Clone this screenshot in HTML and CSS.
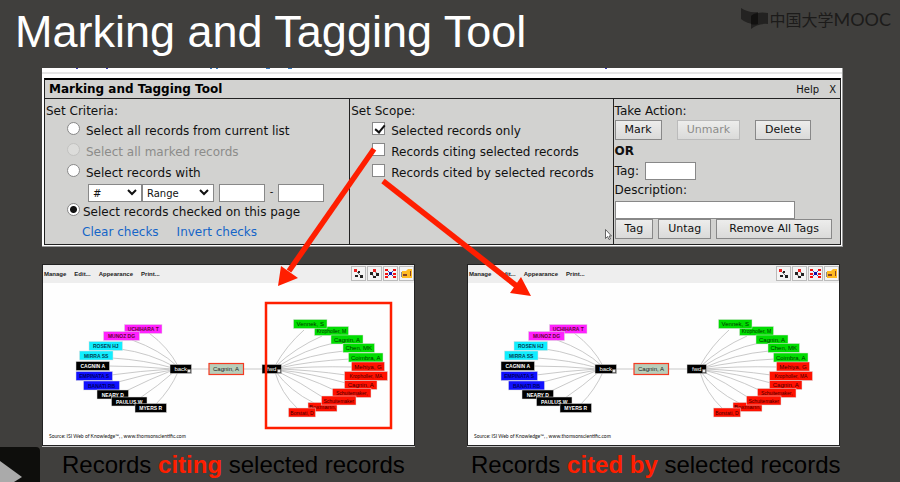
FILE: index.html
```html
<!DOCTYPE html>
<html lang="en">
<head>
<meta charset="utf-8">
<meta name="viewport" content="width=device-width, initial-scale=1">
<title>Marking and Tagging Tool</title>
<link rel="stylesheet" href="styles.css">
</head>
<body>
<main class="slide">
  <header class="slide-head">
    <h1>Marking and Tagging Tool</h1>
    <div class="brand">
      <svg class="brand-mark" viewBox="0 0 27 22" aria-hidden="true">
        <path d="M0 0Q7 5 17 4V16Q7 17 0 11Z" fill="#242322"/>
        <path d="M10 8Q17 3 27 5V16Q17 15 10 21Z" fill="#1c1b1a" opacity=".8"/>
        <path d="M10 8Q13 5 17 5V16Q13 17 10 16Z" fill="#121110"/>
      </svg>
      <span class="brand-cn">中国大学</span><span class="brand-en">MOOC</span>
    </div>
  </header>

  <section class="sheet">
    <svg class="sheet-strip" viewBox="0 0 800 6" preserveAspectRatio="none" aria-hidden="true">
      <path d="M34 0h2v1h-2zM64 0h2v1h-2zM563 0h2v1h-2z" fill="#3b3bb0"/>
      <path d="M168 0h2v1h-2zM174 0h2v1h-2zM224 0h4v1h-4zM246 0h4v1h-4z" fill="#3a7cc4"/>
      <path d="M0 5h800" stroke="#ccc"/>
    </svg>
    <form class="tool">
      <div class="tool-head">
        <h2>Marking and Tagging Tool</h2>
        <a href="#">Help</a>
        <a href="#">X</a>
      </div>
      <div class="tool-body">
        <div class="col">
          <p class="legend">Set Criteria:</p>
          <label class="option"><input type="radio" name="criteria"><span>Select all records from current list</span></label>
          <label class="option off"><input type="radio" name="criteria" disabled><span>Select all marked records</span></label>
          <label class="option"><input type="radio" name="criteria"><span>Select records with</span></label>
          <div class="range">
            <span class="pick pick-small">
              <select aria-label="Field"><option>#</option></select>
              <svg viewBox="0 0 10 7" aria-hidden="true"><path d="M1 1l4 4 4-4"/></svg>
            </span>
            <span class="pick">
              <select aria-label="Comparison"><option>Range</option></select>
              <svg viewBox="0 0 10 7" aria-hidden="true"><path d="M1 1l4 4 4-4"/></svg>
            </span>
            <input class="field bound first" type="text" aria-label="From">
            <span class="dash">-</span>
            <input class="field bound" type="text" aria-label="To">
          </div>
          <label class="option near"><input type="radio" name="criteria" checked><span>Select records checked on this page</span></label>
          <div class="links"><a href="#">Clear checks</a><a href="#">Invert checks</a></div>
        </div>
        <div class="col">
          <p class="legend">Set Scope:</p>
          <label class="option"><input type="checkbox" checked><span>Selected records only</span></label>
          <label class="option"><input type="checkbox"><span>Records citing selected records</span></label>
          <label class="option"><input type="checkbox"><span>Records cited by selected records</span></label>
        </div>
        <div class="col">
          <p class="legend">Take Action:</p>
          <div class="actions wide">
            <button type="button">Mark</button>
            <button type="button" disabled>Unmark</button>
            <button type="button">Delete</button>
          </div>
          <p class="or">OR</p>
          <div class="tag-row"><label for="tag">Tag:</label><input class="field" id="tag" type="text"></div>
          <label class="desc-label" for="desc">Description:</label>
          <input class="field desc" id="desc" type="text">
          <div class="actions">
            <button type="button">Tag</button>
            <button type="button">Untag</button>
            <button class="roomy" type="button">Remove All Tags</button>
          </div>
        </div>
      </div>
    </form>
  </section>

  <div class="maps">
    <figure>
      <div class="map">
        <div class="map-bar">
          <button type="button">Manage</button><button type="button">Edit...</button><button type="button">Appearance</button><button type="button">Print...</button>
          <div class="map-tools"></div>
        </div>
        <svg class="graph" viewBox="43 283 371 162" data-framed="yes" role="img" aria-label="Citation map, citing records"></svg>
      </div>
      <figcaption>Records <strong>citing</strong> selected records</figcaption>
    </figure>
    <figure>
      <div class="map">
        <div class="map-bar">
          <button type="button">Manage</button><button type="button">Edit...</button><button type="button">Appearance</button><button type="button">Print...</button>
          <div class="map-tools"></div>
        </div>
        <svg class="graph" viewBox="43 283 371 162" role="img" aria-label="Citation map, cited records"></svg>
      </div>
      <figcaption class="wide-caption">Records <strong>cited by</strong> selected records</figcaption>
    </figure>
  </div>

  <svg class="overlay" viewBox="0 0 900 482" preserveAspectRatio="xMinYMin meet" aria-hidden="true">
    <g stroke="#ff1e00" stroke-width="5.5">
      <path d="M374 149L289 271"/>
      <path d="M383 181L518 287"/>
    </g>
    <path d="M278 286L281 266L298 278ZM531 296L521 277L510 293Z" fill="#ff1e00"/>
    <path d="M605.5 229.5v9l2-2 1.5 3 1.5-.7-1.5-2.8h2.5z" fill="#fff" stroke="#444" stroke-width=".8"/>
  </svg>
  <button class="play" type="button" aria-label="Play">
    <svg viewBox="0 0 40 35" aria-hidden="true"><path d="M0 14L22 30L14 35H0Z" fill="#aaa"/></svg>
  </button>
</main>
<script src="graph.js"></script>
</body>
</html>
```
FILE: styles.css
```css
* { box-sizing: border-box; }

body {
  margin: 0;
  background: #403f3d;
  color: #111;
  font-family: "DejaVu Sans", sans-serif;
  font-size: 12px;
}

h1, h2, p, figure { margin: 0; }
button, input, select { font: inherit; color: inherit; margin: 0; }

.slide {
  position: relative;
  min-height: 100vh;
  overflow: hidden;
}

.slide-head {
  display: flex;
  justify-content: space-between;
  align-items: flex-start;
  height: 68px;
  padding: 4px 9px 0 15px;
}

h1 {
  color: #fff;
  font: 45px/56px "Liberation Sans", sans-serif;
}

.brand {
  display: flex;
  align-items: center;
  height: 30px;
  color: #1c1b1a;
}
.brand-mark { width: 27px; height: 22px; margin-right: 1px; }
.brand-cn { font: 400 16px/24px "Noto Sans CJK SC", sans-serif; }
.brand-en { font: 400 18px/24px Lato, sans-serif; }

.sheet {
  margin: 0 57px 0 42px;
  padding-bottom: 1px;
  background: #fff;
  border: 1px solid #999;
  border-width: 0 1px 1px 0;
}
.sheet-strip { display: block; width: 100%; height: 6px; }

.tool {
  margin: 4px 1px 0 2px;
  background: #d2d2d0;
  border: 1px solid #222;
  border-top: 2px solid #000;
}
.tool-head {
  display: flex;
  align-items: center;
  gap: 10px;
  height: 19px;
  padding: 0 4px;
  border-bottom: 1px solid #222;
}
.tool-head h2 { flex: 1; font-size: 12px; color: #000; }
.tool-head a { color: #111; text-decoration: none; font-size: 10px; }

.tool-body {
  display: grid;
  grid-template-columns: 305fr 264fr 228fr;
}
.col { padding: 3px 1px 2px; }
.col + .col { border-left: 1px solid #222; }
.legend { height: 18px; line-height: 18px; }

.option {
  display: flex;
  gap: 6px;
  height: 21px;
  padding-left: 21px;
  line-height: 21px;
}
.legend + .option { margin-top: 1px; }
.option.near { gap: 3px; }
.off { color: #8c8c8a; }

input[type="radio"], input[type="checkbox"] {
  flex: none;
  appearance: none;
  width: 13px;
  height: 13px;
  margin-top: 1px;
  background: #fff;
  border: 1px solid #888;
}
input[type="radio"] { border-radius: 50%; }
input[type="radio"]:disabled { background: #dcdcda; border-color: #c2c2c0; }
input[type="radio"]:checked {
  background: radial-gradient(circle, #111 3px, #fff 4px);
}
input[type="checkbox"]:checked::after {
  content: "";
  display: block;
  width: 4px;
  height: 8px;
  margin: 0 0 0 4px;
  border: solid #111;
  border-width: 0 2px 2px 0;
  transform: rotate(40deg);
}

.range { display: flex; height: 18px; margin-left: 42px; font-size: 10px; }
.pick { position: relative; width: 72px; height: 18px; }
.pick-small { width: 54px; }
.pick select {
  appearance: none;
  display: block;
  width: 100%;
  height: 18px;
  padding: 0 4px;
  background: #fff;
  border: 1px solid #888;
  border-radius: 0;
}
.pick svg { position: absolute; right: 5px; top: 5px; width: 10px; height: 7px; pointer-events: none; }
.pick path { fill: none; stroke: #111; stroke-width: 2; }

.field {
  height: 18px;
  padding: 0 3px;
  background: #fff;
  border: 1px solid #888;
  border-radius: 0;
}
.bound { width: 46px; }
.first { margin-left: 5px; }
.dash { width: 13px; text-align: center; line-height: 16px; }

.links { display: flex; gap: 18px; padding-left: 36px; line-height: 19px; }
.links a { color: #1565c8; text-decoration: none; }

.actions { display: flex; gap: 5px; }
.actions.wide { gap: 15px; }
.actions button {
  height: 20px;
  padding: 0 9px;
  font-size: 11px;
  line-height: 16px;
  background: linear-gradient(#ededec, #dadad9);
  border: 1px solid #888;
  border-radius: 0;
}
.actions button:disabled { color: #8c8c8a; border-color: #bbb; }
.actions .roomy { padding: 0 12px; }
.or { font-weight: bold; line-height: 22px; }
.tag-row { display: flex; gap: 6px; line-height: 18px; }
.tag-row .field { width: 51px; }
.desc-label { display: block; line-height: 21px; }
.desc { display: block; width: 180px; }

.maps {
  display: grid;
  grid-template-columns: repeat(2, minmax(0, 1fr));
  gap: 52px;
  margin: 17px 60px 0 42px;
}
.map {
  background: #fefefe;
  border: 1px solid #222;
  box-shadow: 0 1px #bbb;
}
.map-bar {
  display: flex;
  height: 18px;
  background: #eee;
}
.map-bar button {
  padding: 0 4px 0 1px;
  margin-right: 3px;
  background: none;
  border: 0;
  color: #222;
  font: bold 6px/16px "Liberation Sans", sans-serif;
}
.map-tools { display: flex; gap: 1px; margin-left: auto; }
.map-tools svg { width: 15px; height: 15px; margin-top: 1px; }
.graph { display: block; width: 100%; }
.graph text { font-family: "Liberation Sans", sans-serif; font-size: 6px; text-anchor: middle; }
.graph .caps { font-size: 5px; font-weight: bold; }
.graph .long { font-size: 5px; }
.graph .source { font-family: Lato, sans-serif; font-size: 5px; text-anchor: start; fill: #111; }
.graph .edge { fill: none; stroke: #bbb; stroke-width: 0.8; }
.graph .frame { fill: none; stroke: #ff1e00; stroke-width: 2.5; }

figcaption {
  padding: 5px 0 0 20px;
  color: #000;
  font: 24px/28px "Liberation Sans", sans-serif;
  white-space: nowrap;
}
figcaption strong { color: #ff1e00; }
.wide-caption { padding-left: 4px; }

.overlay {
  position: absolute;
  left: 0;
  top: 0;
  width: 100%;
  pointer-events: none;
}
.play {
  position: absolute;
  left: 0;
  bottom: 0;
  width: 40px;
  height: 35px;
  padding: 0;
  background: #0e0e0c;
  border: 0;
  border-radius: 0 4px 0 0;
}
.play svg { display: block; }
```
FILE: graph.js
```js
const NS = "http://www.w3.org/2000/svg";

// x, y, width, fill, text colour, label
const nodes = [
  [124.5, 324.5, 37.5, "#f2f", "#603", "UCHIHARA T"],
  [103.5, 331.5, 36, "#f2f", "#603", "MUNOZ DG"],
  [89, 341.5, 33.5, "#1ef", "#045", "ROSEN HJ"],
  [79.5, 351, 33.5, "#1ef", "#045", "MIRRA SS"],
  [76, 361.5, 33.5, "#000", "#fff", "CAGNIN A"],
  [76, 371.5, 36.5, "#11f", "#006", "EMPINATA S"],
  [83.5, 381, 36, "#11f", "#006", "BANATI RB"],
  [97, 390, 31.5, "#000", "#fff", "NEARY D"],
  [111.5, 397, 35.5, "#000", "#fff", "PAULUS W"],
  [135, 403.5, 31.5, "#000", "#fff", "MYERS R"],
  [314.5, 326.5, 34, "#0d0", "#030", "Kropholler, M"],
  [293.5, 319.5, 33.5, "#0d0", "#030", "Vennek, S"],
  [331, 335, 32, "#0d0", "#030", "Cagnin, A"],
  [343, 343.5, 31.5, "#0d0", "#030", "Chen, MK"],
  [348.5, 353, 34.5, "#0d0", "#030", "Coimbra, A"],
  [351.5, 362, 33, "#f10", "#400", "Mehiya, G"],
  [344.5, 371.5, 43, "#f10", "#400", "Kropholler, MA"],
  [344.5, 380.5, 32.5, "#f10", "#400", "Cagnin, A"],
  [332.5, 388.5, 38.5, "#f10", "#400", "Schuitemaker,"],
  [308, 402.5, 29, "#f10", "#400", "Boxmann,"],
  [321.5, 396, 34.5, "#f10", "#400", "Schuitemaker"],
  [288.5, 408, 27, "#f10", "#400", "Borstati, D"],
  [170, 364.5, 21.5, "#000", "#fff", "back"],
  [262, 364.5, 19.5, "#000", "#fff", "fwd"]
];

const edges = [
  "M178 366Q168 347 149 333", "M177 366Q160 350 132 340", "M175 367Q150 353 120 349",
  "M173 368Q145 360 112 358", "M172 369Q140 366 108 366", "M172 369Q140 371 111 375",
  "M172 370Q145 374 118 382", "M173 370Q150 379 126 391", "M175 371Q158 386 140 398",
  "M178 372Q170 390 156 404", "M190 369H264",
  "M275 366Q286 346 304 330", "M276 366Q295 348 322 336", "M277 367Q305 349 334 343",
  "M278 368Q310 354 344 351", "M279 368Q310 361 350 359", "M279 369Q310 366 353 367",
  "M279 369Q310 370 346 375", "M279 370Q310 373 346 383", "M278 370Q305 376 334 390",
  "M277 371Q300 382 324 398", "M276 372Q290 391 314 403", "M275 372Q281 393 297 408"
];

const el = (parent, tag, attrs, text) => {
  const item = document.createElementNS(NS, tag);
  for (const key in attrs) item.setAttribute(key, attrs[key]);
  if (text) item.textContent = text;
  parent.appendChild(item);
};

const labelClass = (label) => {
  if (label === label.toUpperCase()) return "caps";
  return label.length > 10 ? "long" : "name";
};

document.querySelectorAll(".graph").forEach((svg) => {
  edges.forEach((d) => el(svg, "path", { d, class: "edge" }));
  nodes.forEach(([x, y, width, fill, ink, label]) => {
    el(svg, "rect", { x, y, width, height: 9, fill, stroke: "#ddd", "stroke-width": 0.5 });
    el(svg, "text", { x: x + width / 2, y: y + 6.5, fill: ink, class: labelClass(label) }, label);
  });
  el(svg, "path", { d: "M187.5 369.5h3v3h-3zM277.5 369.5h3v3h-3z", fill: "#eee", stroke: "#777", "stroke-width": 0.5 });
  el(svg, "rect", { x: 209, y: 363.5, width: 34.5, height: 11, fill: "#b9cdb9", stroke: "#f43a22", "stroke-width": 1.2 });
  el(svg, "text", { x: 226, y: 371, fill: "#222" }, "Cagnin, A");
  el(svg, "text", { x: 49, y: 438, class: "source" }, "Source: ISI Web of Knowledge™, , www.thomsonscientific.com");
  if (svg.dataset.framed) {
    el(svg, "rect", { x: 266, y: 303, width: 125, height: 125, class: "frame" });
  }
});

const tools = [
  [["M4 4L10 10", "#777"], ["M3 3h3v3h-3z", "#e22"], ["M7 5h2v2h-2zM4 9h3v2h-3zM9 9h3v3h-3z", "#222"]],
  [["M7 5L4 8L8 11L11 8Z", "#777"], ["M6 3h3v3h-3z", "#e22"], ["M3 6h3v3h-3zM9 7h3v3h-3zM6 10h3v2h-3z", "#222"]],
  [["M3 3L12 12M12 3L3 12", "#35c"], ["M2 3h3v2h-3zM2 7h3v2h-3zM2 10h3v2h-3zM10 3h3v2h-3zM10 7h3v2h-3zM10 10h3v2h-3z", "#e11"], ["M6 6h3v3h-3z", "#11a"]],
  [["M3 6h4v5h-4z", "#222"], ["M3 5h4l2-2h4v9h-10z", "#fb2"], ["M4 8h4v2h-4zM11 5h1v5h-1z", "#842"]]
];

document.querySelectorAll(".map-tools").forEach((bar) => {
  tools.forEach((parts) => {
    const icon = document.createElementNS(NS, "svg");
    icon.setAttribute("viewBox", "0 0 15 15");
    el(icon, "rect", { x: 0.5, y: 0.5, width: 14, height: 14, fill: "#f4f4f4", stroke: "#bbb" });
    parts.forEach(([d, color], i) => el(icon, "path", { d, fill: i ? color : "none", stroke: i ? "none" : color }));
    bar.appendChild(icon);
  });
});
```
